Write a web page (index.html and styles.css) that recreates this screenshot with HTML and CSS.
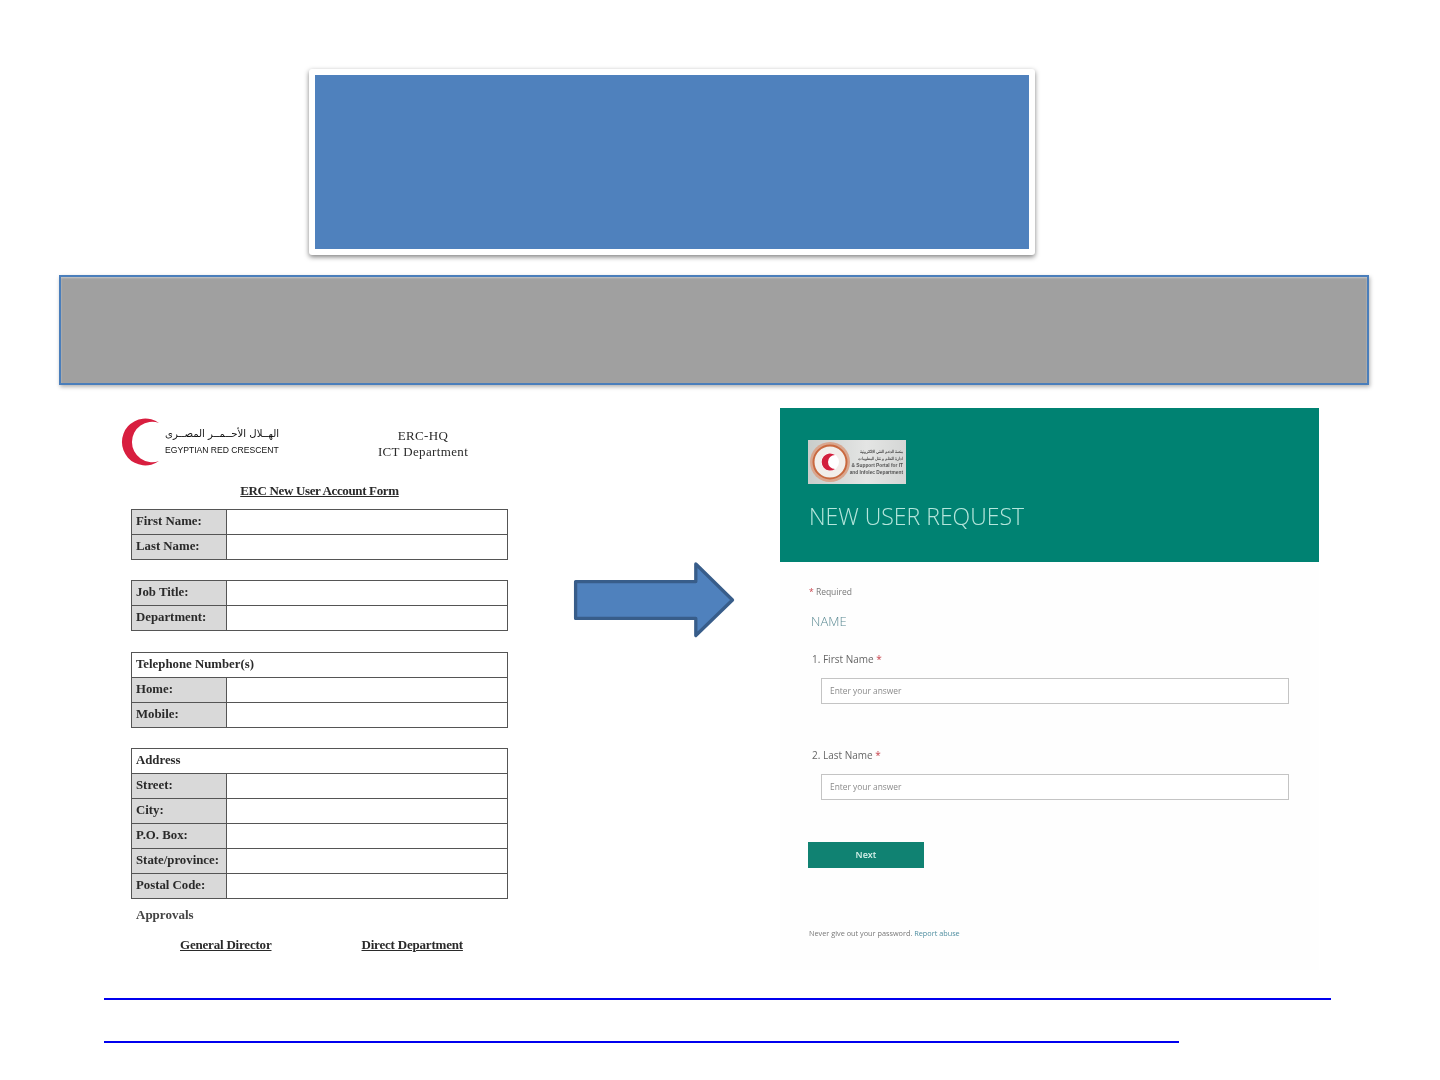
FILE: index.html
```html
<!DOCTYPE html>
<html lang="en">
<head>
<meta charset="utf-8">
<title>New user request</title>
<link rel="stylesheet" href="styles.css">
</head>
<body>
<main class="slide">
  <div class="title-card"><div class="title-fill"></div></div>
  <div class="banner"></div>
  <section class="content">
    <article class="doc">
      <header class="doc-head">
        <svg class="crescent" width="44" height="48" viewBox="0 0 44 48"><path d="M38 5 A23.400 23.400 0 1 0 38 43 A20.200 20.200 0 1 1 38 5 Z" fill="#d81e3f"/></svg>
        <div class="org">
          <div class="org-ar" dir="rtl">الهــلال الأحــمــر المصــرى</div>
          <div class="org-en">EGYPTIAN RED CRESCENT</div>
        </div>
        <div class="dept">ERC-HQ<br>ICT Department</div>
      </header>
      <h1 class="doc-title">ERC New User Account Form</h1>
      <table class="tbl tbl-a">
        <colgroup><col class="col-label"><col></colgroup>
        <tr><th>First Name:</th><td></td></tr>
        <tr><th>Last Name:</th><td></td></tr>
      </table>
      <table class="tbl">
        <colgroup><col class="col-label"><col></colgroup>
        <tr><th>Job Title:</th><td></td></tr>
        <tr><th>Department:</th><td></td></tr>
      </table>
      <table class="tbl">
        <colgroup><col class="col-label"><col></colgroup>
        <tr><th class="span" colspan="2">Telephone Number(s)</th></tr>
        <tr><th>Home:</th><td></td></tr>
        <tr><th>Mobile:</th><td></td></tr>
      </table>
      <table class="tbl">
        <colgroup><col class="col-label"><col></colgroup>
        <tr><th class="span" colspan="2">Address</th></tr>
        <tr><th>Street:</th><td></td></tr>
        <tr><th>City:</th><td></td></tr>
        <tr><th>P.O. Box:</th><td></td></tr>
        <tr><th>State/province:</th><td></td></tr>
        <tr><th>Postal Code:</th><td></td></tr>
      </table>
      <p class="approvals">Approvals</p>
      <div class="signers"><span class="signer-a">General Director</span><span class="signer-b">Direct Department</span></div>
    </article>

    <svg class="arrow" width="164" height="80" viewBox="0 0 164 80"><path d="M2.600 20.600 H122.800 V3 L159.500 39 L122.800 74.500 V57.400 H2.600 Z" fill="#4f81bd" stroke="#385d8a" stroke-width="3.300" stroke-linejoin="round"/></svg>

    <article class="form">
      <header class="form-head">
        <div class="form-logo">
          <svg class="seal" width="44" height="44" viewBox="0 0 44 44"><circle cx="22" cy="22" r="20" fill="#d9a68e"/><circle cx="22" cy="22" r="16.500" fill="#f2eeea" stroke="#c9693f" stroke-width="2"/><circle cx="22" cy="22" r="9" fill="#fff"/><path d="M27 15 A8.500 8.500 0 1 0 27 29 A7 7 0 0 1 27 15 Z" fill="#d21f3c"/></svg>
          <div class="logo-text">
            <span class="logo-ar" dir="rtl">منصة الدعم الفني الالكترونية</span>
            <span class="logo-ar" dir="rtl">ادارة النظم و نقل المعلومات</span>
            <span>&amp; Support Portal for IT</span>
            <span>and Infolec Department</span>
          </div>
        </div>
        <h2 class="form-title">NEW USER REQUEST</h2>
      </header>
      <div class="form-body">
        <p class="required"><span class="star">*</span> Required</p>
        <h3 class="section">NAME</h3>
        <p class="question">1. First Name <span class="star">*</span></p>
        <div class="answer">Enter your answer</div>
        <p class="question q2">2. Last Name <span class="star">*</span></p>
        <div class="answer">Enter your answer</div>
        <div class="next">Next</div>
        <p class="foot">Never give out your password. <span class="abuse">Report abuse</span></p>
      </div>
    </article>
  </section>
  <div class="rule rule-long"></div>
  <div class="rule rule-short"></div>
</main>
</body>
</html>
```

FILE: styles.css
```css
* { box-sizing: border-box; }
html, body { margin: 0; padding: 0; background: #fff; }
body { width: 1440px; height: 1080px; overflow: hidden; }
.slide { display: flex; flex-direction: column; height: 1080px; padding-top: 69px; }

.title-card {
  width: 726px; height: 186px; margin-left: 309px; padding: 6px;
  background: #fff; border-radius: 3px;
  box-shadow: 0 2px 5px rgba(0,0,0,.5);
}
.title-fill { height: 100%; background: #4f81bd; }

.banner {
  width: 1310px; height: 110px; margin: 20px 0 0 59px;
  background: #a0a0a0; border: 2px solid #4a7ebb;
  box-shadow: 1px 2px 4px rgba(0,0,0,.3), inset 0 1px 2px rgba(255,255,255,.4);
}

.content { display: flex; align-items: flex-start; height: 590px; margin-top: 23px; }

.doc {
  width: 386px; margin-left: 122px; padding-top: 10px;
  font-family: "Liberation Serif", serif; font-weight: bold; font-size: 13px;
  color: #2a2a2a; filter: blur(.5px);
}
.doc-head { display: flex; height: 48px; }
.crescent { flex: none; margin-left: -1px; }
.org { width: 116px; padding-top: 9px; font-family: "Liberation Sans", sans-serif; font-weight: normal; }
.org-ar { height: 17px; font-family: "DejaVu Sans", sans-serif; font-size: 10.100px; line-height: 14px; text-align: left; color: #111; white-space: nowrap; }
.org-en { font-size: 8.600px; line-height: 13px; color: #111; white-space: nowrap; }
.dept { flex: none; width: 96px; margin-left: 94px; padding-top: 10px; font-weight: normal; font-size: 13px; line-height: 16px; letter-spacing: .35px; text-align: center; white-space: nowrap; }

.doc-title { margin: 17px 0 0 8px; width: 379px; font-size: 13px; line-height: 16px; letter-spacing: -.35px; text-align: center; text-decoration: underline; color: #2a2a2a; }

.tbl { border-collapse: collapse; table-layout: fixed; width: 377px; margin: 20px 0 0 9px; border: 1.500px solid #555; }
.tbl-a { margin-top: 10px; }
.tbl + .tbl + .tbl { margin-top: 21px; }
.tbl + .tbl + .tbl + .tbl { margin-top: 20px; }
.col-label { width: 95px; }
.tbl tr { height: 25px; }
.tbl th, .tbl td { padding: 0; border: 1.500px solid #555; }
.tbl th { padding: 0 0 2px 4px; background: #d9d9d9; text-align: left; font-size: 12.800px; white-space: nowrap; }
.tbl th.span { background: #fff; }
.tbl td { background: #fff; }

.approvals { margin: 8px 0 0 14px; line-height: 16px; color: #444; }
.signers { display: flex; margin-top: 14px; letter-spacing: -.2px; text-decoration: underline; line-height: 16px; }
.signer-a { margin-left: 58px; }
.signer-b { margin-left: 90px; }

.arrow { flex: none; margin: 153px 0 0 65px; }

.form { width: 539px; height: 562px; margin-left: 43px; background: #fefefe; font-family: "Open Sans", sans-serif; filter: blur(.35px); }
.form-head { height: 154px; padding: 32px 0 0 28px; background: #008272; }
.form-logo {
  display: flex; align-items: center; width: 98px; height: 44px; overflow: hidden;
  background: linear-gradient(90deg, #c9cdcb, #e4e5e4 60%, #d4d6d5);
}
.seal { flex: none; }
.logo-text { display: flex; flex-direction: column; align-items: flex-end; flex: 1; min-width: 0; padding-right: 3px; font-family: "Liberation Sans", sans-serif; font-weight: bold; font-size: 4.800px; line-height: 7px; color: #555; white-space: nowrap; }
.logo-ar { font-size: 4px; }
.form-title { margin: 16px 0 0 1px; font-weight: 300; font-size: 23px; line-height: 32px; color: #b5e6dc; white-space: nowrap; }

.form-body { padding-left: 29px; }
.required { margin: 24px 0 0; font-size: 8.500px; line-height: 12px; color: #777; }
.star { color: #c8434d; }
.section { margin: 14px 0 0 2px; font-weight: 300; font-size: 13px; line-height: 18px; color: #5b8a93; }
.question { margin: 22px 0 0 3px; font-size: 10px; line-height: 14px; color: #666; }
.q2 { margin-top: 44px; }
.answer {
  width: 468px; height: 26px; margin: 12px 0 0 12px; padding-left: 8px;
  background: #fff; border: 1px solid #c4c4c4;
  font-size: 8.400px; line-height: 24px; color: #8a8a8a;
}
.next {
  width: 116px; height: 26px; margin: 42px 0 0 -1px;
  background: #108272; color: #d8f3ec;
  font-size: 9px; font-weight: 600; line-height: 26px; text-align: center;
}
.foot { margin: 59px 0 0; font-size: 7.300px; line-height: 12px; color: #777; white-space: nowrap; }
.abuse { color: #4f8ea0; }

.rule { height: 2px; margin-left: 104px; background: #0000ee; }
.rule-long { width: 1227px; }
.rule-short { width: 1075px; margin-top: 41px; }
```
